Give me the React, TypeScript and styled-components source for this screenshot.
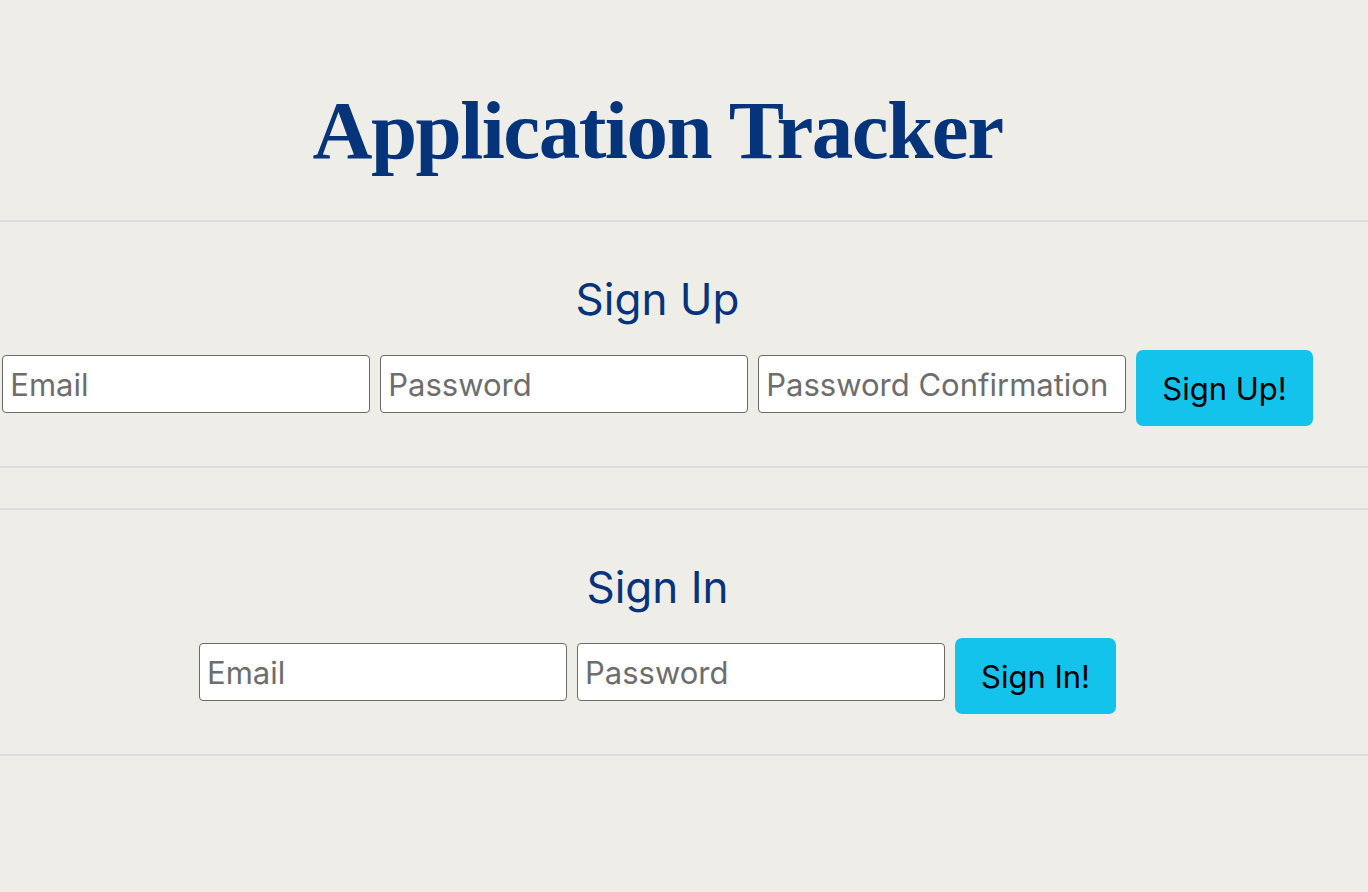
import React from "react";
import styled, { createGlobalStyle } from "styled-components";

const GlobalStyle = createGlobalStyle`
  html, body {
    margin: 0;
    padding: 0;
    background: #eeede8;
    min-height: 100%;
  }
  body {
    font-family: Inter, "Noto Sans", sans-serif;
  }
  * { box-sizing: border-box; }
`;

const Page = styled.div`
  min-height: 892px;
  background: #eeede8;
  display: flex;
  flex-direction: column;
`;

const Header = styled.header`
  width: 1315px;
  padding: 84px 0 43px;
  text-align: center;
`;

const Title = styled.h1`
  margin: 0;
  font-family: "Liberation Serif", "Times New Roman", serif;
  font-weight: 700;
  font-size: 83px;
  line-height: 93px;
  letter-spacing: -1.5px;
  color: #06347b;
`;

const Section = styled.section<{ $gapBefore?: number }>`
  border-top: 2px solid #dcdee2;
  border-bottom: 2px solid #dcdee2;
  margin-top: ${(p) => p.$gapBefore ?? 0}px;
  padding: 51px 0 40px;
`;

const Inner = styled.div`
  width: 1315px;
  display: flex;
  flex-direction: column;
  align-items: center;
`;

const Heading = styled.h2`
  margin: 0 0 24px;
  font-family: Inter, "Noto Sans", sans-serif;
  font-weight: 400;
  font-size: 44px;
  line-height: 53px;
  color: #06347b;
`;

const Form = styled.form`
  display: flex;
  align-items: flex-start;
  justify-content: center;
  gap: 10px;
`;

const Input = styled.input`
  flex: 0 0 auto;
  width: 368px;
  height: 58px;
  margin: 5px 0 0;
  padding: 0 7px;
  border: 1px solid #6a6a6a;
  border-radius: 4px;
  background: #fff;
  font-family: Inter, "Noto Sans", sans-serif;
  font-size: 31px;
  color: #222;
  outline: none;
  &::placeholder {
    color: #6d6d6d;
  }
`;

const Button = styled.button`
  flex: 0 0 auto;
  height: 76px;
  margin: 0;
  padding: 0 26px;
  border: none;
  border-radius: 7px;
  background: #14c3ec;
  color: #000;
  font-family: Inter, "Noto Sans", sans-serif;
  font-size: 31px;
  white-space: nowrap;
  cursor: pointer;
`;

export default function App() {
  return (
    <>
      <GlobalStyle />
      <Page>
        <Header>
          <Title>Application Tracker</Title>
        </Header>
        <Section>
          <Inner>
            <Heading>Sign Up</Heading>
            <Form onSubmit={(e) => e.preventDefault()}>
              <Input type="email" placeholder="Email" />
              <Input type="password" placeholder="Password" />
              <Input type="password" placeholder="Password Confirmation" />
              <Button type="submit">Sign Up!</Button>
            </Form>
          </Inner>
        </Section>
        <Section $gapBefore={40}>
          <Inner>
            <Heading>Sign In</Heading>
            <Form onSubmit={(e) => e.preventDefault()}>
              <Input type="email" placeholder="Email" />
              <Input type="password" placeholder="Password" />
              <Button type="submit">Sign In!</Button>
            </Form>
          </Inner>
        </Section>
      </Page>
    </>
  );
}
